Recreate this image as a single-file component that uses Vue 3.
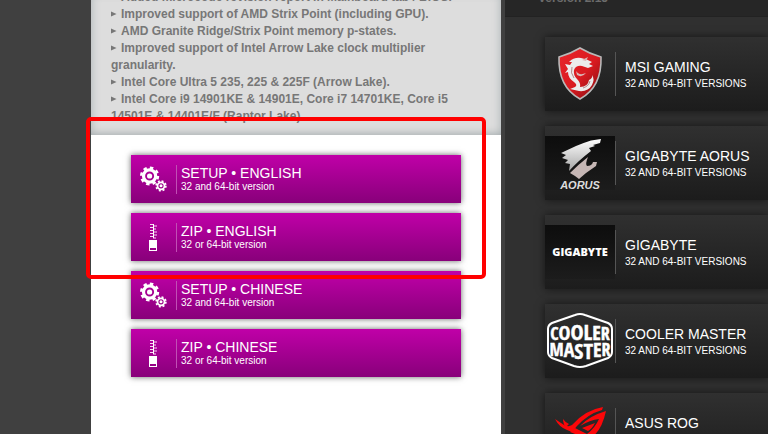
<script setup>
const notes = [
  'Added microcode revision report in Mainboard tab / BIOS.',
  'Improved support of AMD Strix Point (including GPU).',
  'AMD Granite Ridge/Strix Point memory p-states.',
  'Improved support of Intel Arrow Lake clock multiplier granularity.',
  'Intel Core Ultra 5 235, 225 & 225F (Arrow Lake).',
  'Intel Core i9 14901KE & 14901E, Core i7 14701KE, Core i5 14501E & 14401E/F (Raptor Lake).'
]

const downloads = [
  { icon: 'gears', title: 'SETUP • ENGLISH', detail: '32 and 64-bit version' },
  { icon: 'zip', title: 'ZIP • ENGLISH', detail: '32 or 64-bit version' },
  { icon: 'gears', title: 'SETUP • CHINESE', detail: '32 and 64-bit version' },
  { icon: 'zip', title: 'ZIP • CHINESE', detail: '32 or 64-bit version' }
]

const editions = [
  { logo: 'msi', title: 'MSI GAMING' },
  { logo: 'aorus', title: 'GIGABYTE AORUS' },
  { logo: 'gigabyte', title: 'GIGABYTE' },
  { logo: 'cooler', title: 'COOLER MASTER' },
  { logo: 'rog', title: 'ASUS ROG' }
]
</script>

<template>
  <div class="page">
    <main class="main">
      <section class="notes">
        <ul class="note-list">
          <li v-for="note in notes" :key="note">
            <svg class="bullet" viewBox="0 0 6 6" aria-hidden="true"><path d="M0 0.5 5.5 3 0 5.5Z" /></svg>{{ note }}
          </li>
        </ul>
      </section>

      <nav class="downloads">
        <a v-for="item in downloads" :key="item.title" class="download" href="#">
          <span class="download-icon">
            <svg v-if="item.icon === 'gears'" width="28" height="28" viewBox="0 0 28 28" aria-hidden="true">
              <circle cx="10.6" cy="11" r="6.1" fill="none" stroke="#fff" stroke-width="3.2" />
              <circle cx="10.6" cy="11" r="8.3" fill="none" stroke="#fff" stroke-width="2.6" stroke-dasharray="3.4 3.12" />
              <circle cx="10.6" cy="11" r="2.6" fill="#fff" />
              <circle cx="22" cy="20.8" r="3.5" fill="none" stroke="#fff" stroke-width="1.8" />
              <circle cx="22" cy="20.8" r="4.9" fill="none" stroke="#fff" stroke-width="1.6" stroke-dasharray="2 1.85" />
              <circle cx="22" cy="20.8" r="1.5" fill="#fff" />
            </svg>
            <svg v-else width="28" height="28" viewBox="0 0 28 28" aria-hidden="true">
              <path
                d="M11 1.5h4M14 3h4M11 4.5h4M14 6h3M11 7.5h4M14 9h4M11 10.5h4M14 12h4M11 13.5h4M14 15h3"
                stroke="#f7d9f2" stroke-width="1"
              />
              <path d="M14.5 1v14" stroke="#fff" stroke-width="1" />
              <path fill="#fff" fill-rule="evenodd" d="M10 17h8v11h-8ZM11 25v2h6v-2Z" />
            </svg>
          </span>
          <span class="download-text">
            <span class="download-title">{{ item.title }}</span>
            <span class="download-detail">{{ item.detail }}</span>
          </span>
        </a>
      </nav>
      <div class="highlight" aria-hidden="true"></div>
    </main>

    <aside class="side">
      <header class="side-head">Version 2.15</header>
      <nav class="editions">
        <a v-for="item in editions" :key="item.title" class="edition" href="#">
          <span class="logo" :class="item.logo">
            <svg v-if="item.logo === 'msi'" width="70" height="64" viewBox="0 0 70 64" aria-hidden="true">
              <defs>
                <linearGradient id="shield" x1="0" y1="0" x2="1" y2="1">
                  <stop offset="0" stop-color="#e9262b" />
                  <stop offset="0.55" stop-color="#d91a20" />
                  <stop offset="1" stop-color="#7c0d10" />
                </linearGradient>
              </defs>
              <path d="M35 6Q25 12 14 15Q13 45 35 57Q57 45 56 15Q45 12 35 6Z" fill="url(#shield)" stroke="#b9b9b9" stroke-width="1.6" />
              <path
                d="M24 20Q29 15 36 16Q42 17 47 20L44 22L48 24L43 26L37 24Q31 23 29 28Q28 33 32 37Q36 41 35 45Q43 45 44 38Q48 36 47 33Q50 37 47 43Q43 50 34 49L25 47L30 45Q33 43 29 40Q23 36 23 30L20 31L23 27L20 22L25 23L27 20Z"
                fill="#ececec"
              />
              <path d="M31 29Q34 34 41 31Q37 36 32 33M37 18L43 15L41 19" fill="#d9b5b5" />
              <path d="M27 25Q25 31 29 36M38 46Q44 44 45 39" fill="none" stroke="#a16b6b" stroke-width="0.8" />
            </svg>

            <svg v-else-if="item.logo === 'aorus'" width="70" height="44" viewBox="0 0 70 44" aria-hidden="true">
              <defs>
                <linearGradient id="wing" x1="0" y1="0" x2="0" y2="1">
                  <stop offset="0" stop-color="#ffffff" />
                  <stop offset="1" stop-color="#a6a6a6" />
                </linearGradient>
              </defs>
              <path
                d="M56 3L46 4.500Q38 7 31 10L16 17L21 19L17 22L23 24L20 27L25 28L24 35Q33 25 46 15L44 12L50 10L48 9L55 7Z"
                fill="url(#wing)"
              />
              <path d="M25 37Q34 28 43 21Q40 28 42 30Q47 30 48 26L52 26L51 30L41 37L34 43L30 40Z" fill="#c6b7b5" />
            </svg>

            <svg v-else-if="item.logo === 'cooler'" width="70" height="58" viewBox="0 0 70 58" aria-hidden="true">
              <path
                d="M30 3Q35 1 40 3L63 11Q67 13 67 17V40Q67 44 63 46L41 54Q35 56 29 54L7 46Q3 44 3 40V17Q3 13 7 11Z"
                fill="none" stroke="#fff" stroke-width="2"
              />
              <g class="cooler-word">
                <text x="35" y="28" text-anchor="middle">
                  <tspan font-size="18">C</tspan><tspan font-size="20">O</tspan><tspan font-size="22">OL</tspan><tspan font-size="20">E</tspan><tspan font-size="18">R</tspan>
                </text>
                <text x="35" y="44" text-anchor="middle">
                  <tspan font-size="18">M</tspan><tspan font-size="20" dy="1">A</tspan><tspan font-size="22" dy="2">ST</tspan><tspan font-size="20" dy="-2">E</tspan><tspan font-size="18" dy="-1">R</tspan>
                </text>
              </g>
            </svg>

            <svg v-else-if="item.logo === 'rog'" width="70" height="48" viewBox="0 8 70 48" aria-hidden="true">
              <g fill="#fb0709">
                <path d="M10 21L16 25Q22 30 27 27Q40 12 58 9L57 12Q43 16 32 28L27 34L22 32Q14 29 10 21Z" />
                <path d="M18 21Q20 24 24 26L21 29Q18 26 18 21Z" />
                <path d="M61 13Q56 36 43 41L25 34L30 30L42 36Q50 30 54 21Q45 22 35 28Q44 18 61 13Z" />
                <path d="M37 30L50 25Q47 31 43 33Z" />
              </g>
            </svg>
            <span v-if="item.logo === 'aorus'" class="aorus-word">AORUS</span>
            <span v-if="item.logo === 'gigabyte'" class="gigabyte-word">GIGABYTE</span>
          </span>
          <span class="edition-text">
            <span class="edition-title">{{ item.title }}</span>
            <span class="edition-detail">32 AND 64-BIT VERSIONS</span>
          </span>
        </a>
      </nav>
    </aside>
  </div>
</template>

<style>
body {
  margin: 0;
  background: #404040;
}
</style>

<style scoped>
.page {
  display: grid;
  grid-template-columns: minmax(0, 410fr) minmax(0, 263fr);
  gap: 4px;
  height: 100vh;
  padding-left: 91px;
  box-sizing: border-box;
  overflow: hidden;
  font-family: "Liberation Sans", Arial, sans-serif;
}

.main {
  position: relative;
  background: #fff;
}

.notes {
  display: flex;
  flex-direction: column;
  justify-content: flex-end;
  height: 135px;
  padding: 0 20px 10px;
  box-sizing: border-box;
  overflow: hidden;
  background: #ddd;
  box-shadow: inset 0 -8px 8px -7px #a3abad, inset 8px 0 8px -7px #b4bbbd, inset -8px 0 8px -7px #b4bbbd;
}

.note-list {
  margin: 0;
  padding: 0;
  list-style: none;
  color: #777;
  font-size: 12px;
  font-weight: bold;
  line-height: 17px;
}

.bullet {
  width: 6px;
  height: 6px;
  margin-right: 4px;
  vertical-align: 1px;
  fill: #777;
}

.downloads {
  display: flex;
  flex-direction: column;
  gap: 10px;
  padding: 20px 40px;
}

.download {
  display: flex;
  align-items: center;
  height: 48px;
  background: linear-gradient(#c000a8, #88007a);
  box-shadow: 0 0 6px rgba(0, 0, 0, 0.6);
  color: #fff;
  text-decoration: none;
}

.download-icon {
  display: flex;
  padding: 0 9px 0 8px;
}

.download-text {
  display: flex;
  flex-direction: column;
  padding: 0 4px 2px;
  border-left: 1px solid #c050b4;
}

.download-title {
  font-size: 14px;
  line-height: 16px;
}

.download-detail {
  font-size: 10px;
  line-height: 11px;
}

.highlight {
  position: absolute;
  top: 117px;
  left: -5px;
  right: 15px;
  height: 162px;
  box-sizing: border-box;
  border: 4px solid #f00;
  border-radius: 5px;
}

.side {
  background: #303030;
  overflow: hidden;
}

.side-head {
  display: flex;
  align-items: flex-end;
  height: 17px;
  padding: 0 33px 11px;
  box-sizing: border-box;
  border-bottom: 1px solid #222;
  background: #262626;
  color: #6c6c6c;
  font-size: 12px;
  font-weight: bold;
  line-height: 14px;
}

.editions {
  display: flex;
  flex-direction: column;
  gap: 15px;
  padding: 20px 0 0 40px;
}

.edition {
  display: flex;
  align-items: center;
  flex: none;
  height: 74px;
  background: linear-gradient(#303030, #1c1c1c);
  box-shadow: 0 0 8px rgba(0, 0, 0, 0.6);
  color: #fff;
  text-decoration: none;
}

.logo {
  display: flex;
  flex-direction: column;
  align-items: center;
  justify-content: center;
  width: 70px;
}

.aorus,
.gigabyte {
  height: 54px;
  background: linear-gradient(#0d0d0d, #1c1c1c);
}

.aorus-word {
  color: #ddd;
  font-size: 11px;
  font-style: italic;
  font-weight: bold;
  line-height: 10px;
}

.gigabyte-word {
  font-family: "Open Sans", "Noto Sans", sans-serif;
  font-size: 11px;
  font-weight: 800;
  line-height: 14px;
}

.cooler-word {
  fill: #fff;
  stroke: #fff;
  stroke-width: 0.4;
  font-family: "Liberation Sans Narrow", "Open Sans Condensed", "DejaVu Sans Condensed", sans-serif;
  font-weight: bold;
}

.edition-text {
  display: flex;
  flex-direction: column;
  justify-content: center;
  height: 44px;
  padding: 2px 0 0 9px;
  box-sizing: border-box;
  border-left: 1px solid #555;
  white-space: nowrap;
}

.edition-title {
  font-size: 14px;
  line-height: 17px;
}

.edition-detail {
  font-size: 10px;
  line-height: 15px;
}
</style>
